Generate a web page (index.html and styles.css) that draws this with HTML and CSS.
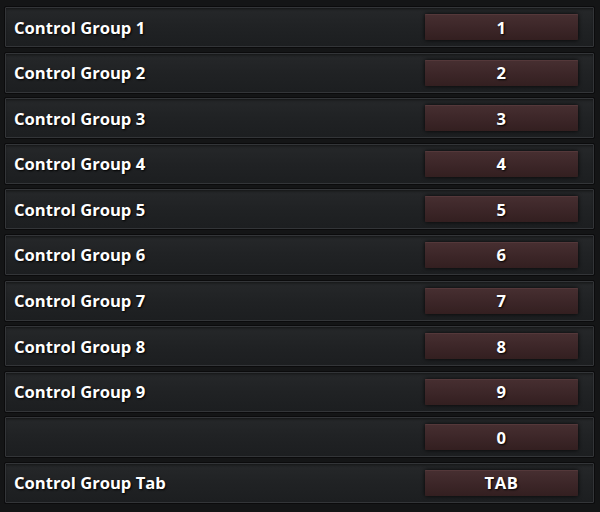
FILE: index.html
```html
<!DOCTYPE html>
<html lang="en">
<head>
  <meta charset="UTF-8" />
  <title>Control Groups</title>
  <link rel="stylesheet" href="styles.css">
</head>
<body>
  <div class="binds">
    <div class="row"><span class="name">Control Group 1</span><button class="key">1</button></div>
    <div class="row"><span class="name">Control Group 2</span><button class="key">2</button></div>
    <div class="row"><span class="name">Control Group 3</span><button class="key">3</button></div>
    <div class="row"><span class="name">Control Group 4</span><button class="key">4</button></div>
    <div class="row"><span class="name">Control Group 5</span><button class="key">5</button></div>
    <div class="row"><span class="name">Control Group 6</span><button class="key">6</button></div>
    <div class="row"><span class="name">Control Group 7</span><button class="key">7</button></div>
    <div class="row"><span class="name">Control Group 8</span><button class="key">8</button></div>
    <div class="row"><span class="name">Control Group 9</span><button class="key">9</button></div>
    <div class="row"><span class="name"></span><button class="key">0</button></div>
    <div class="row"><span class="name">Control Group Tab</span><button class="key">TAB</button></div>
  </div>
</body>
</html>
```

FILE: styles.css
```css
body {
  margin: 0;
  background: #141516;
  font-family: 'Open Sans', 'Lato', sans-serif;
  color: #fff;
}

.binds {
  display: flex;
  flex-direction: column;
  gap: 3.6px;
  padding: 6px 5px 0 4px;
}

.row {
  height: 42px;
  box-sizing: border-box;
  display: flex;
  align-items: center;
  justify-content: space-between;
  padding: 0 16px 0 9px;
  background: linear-gradient(180deg, #26282a 0%, #202224 50%, #1c1e20 100%);
  border: 1px solid #0b0b0c;
  border-radius: 2px;
  box-shadow: inset 0 0 0 1px #333538, inset 0 2px 3px rgba(0, 0, 0, 0.5);
}

.name {
  font-size: 16.6px;
  font-weight: 700;
  text-shadow: 1px 1px 2px #000;
}

.key {
  width: 153px;
  height: 26px;
  border: none;
  border-radius: 1px;
  background: linear-gradient(180deg, #472f31 0%, #3b2527 60%, #331f20 100%);
  box-shadow: 0 0 4px rgba(0, 0, 0, 0.9), inset 0 1px 0 #54383a;
  color: #fff;
  font-family: inherit;
  font-size: 16.6px;
  font-weight: 700;
  letter-spacing: 0.6px;
  text-shadow: 1px 1px 2px #000;
  padding: 0;
}
```
